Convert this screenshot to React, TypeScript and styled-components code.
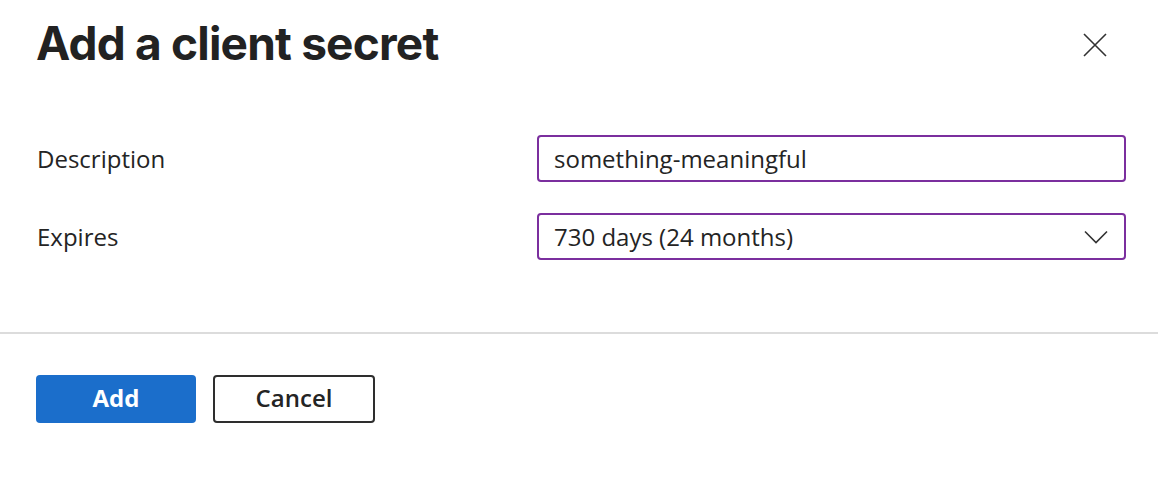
import styled, { createGlobalStyle } from "styled-components";

const GlobalStyle = createGlobalStyle`
  * { box-sizing: border-box; }
  body {
    margin: 0;
    background: #ffffff;
    font-family: "Open Sans", "Noto Sans", sans-serif;
    color: #242424;
  }
`;

const Panel = styled.div`
  width: 1158px;
  height: 478px;
  display: flex;
  flex-direction: column;
`;

const Header = styled.header`
  display: flex;
  justify-content: space-between;
  align-items: flex-start;
  padding: 15px 51px 0 36px;
  height: 115px;
`;

const Title = styled.h1`
  margin: 0;
  font-family: Inter, "Liberation Sans", sans-serif;
  font-weight: 700;
  font-size: 46px;
  letter-spacing: -0.8px;
  color: #222222;
`;

const CloseButton = styled.button`
  border: none;
  background: none;
  padding: 0;
  margin-top: 18px;
  width: 24px;
  height: 24px;
  cursor: pointer;
  color: #323232;
`;

const Form = styled.div`
  display: flex;
  flex-direction: column;
  gap: 31px;
  padding: 20px 32px 0 37px;
  height: 217px;
`;

const Row = styled.div`
  display: grid;
  grid-template-columns: 500px 1fr;
  align-items: center;
`;

const Label = styled.label`
  font-size: 24px;
  color: #242424;
`;

const Field = styled.div`
  height: 47px;
  border: 2px solid #7b2f9e;
  border-radius: 4px;
  display: flex;
  align-items: center;
  justify-content: space-between;
  padding: 0 16px 0 15px;
  font-size: 24px;
  color: #242424;
`;

const Divider = styled.hr`
  margin: 0;
  border: none;
  border-top: 2px solid #dcdcdc;
`;

const Footer = styled.footer`
  display: flex;
  gap: 17px;
  padding: 41px 36px 0;
`;

const Button = styled.button<{ $primary?: boolean }>`
  width: ${(p) => (p.$primary ? "160px" : "162px")};
  height: 48px;
  border-radius: 4px;
  font-family: "Open Sans", "Noto Sans", sans-serif;
  font-size: 24px;
  font-weight: ${(p) => (p.$primary ? 700 : 600)};
  cursor: pointer;
  display: flex;
  align-items: center;
  justify-content: center;
  padding: 0 0 4px;
  background: ${(p) => (p.$primary ? "#1b6ecb" : "#ffffff")};
  color: ${(p) => (p.$primary ? "#ffffff" : "#242424")};
  border: ${(p) => (p.$primary ? "none" : "2px solid #2e2e2e")};
`;

function App() {
  return (
    <>
      <GlobalStyle />
      <Panel>
        <Header>
          <Title>Add a client secret</Title>
          <CloseButton aria-label="Close">
            <svg width="24" height="24" viewBox="0 0 24 24">
              <path d="M1 1 L23 23 M23 1 L1 23" stroke="currentColor" strokeWidth="1.6" />
            </svg>
          </CloseButton>
        </Header>
        <Form>
          <Row>
            <Label>Description</Label>
            <Field>something-meaningful</Field>
          </Row>
          <Row>
            <Label>Expires</Label>
            <Field>
              730 days (24 months)
              <svg width="24" height="14" viewBox="0 0 24 14">
                <path d="M1 1.5 L12 12.5 L23 1.5" fill="none" stroke="#323232" strokeWidth="1.6" />
              </svg>
            </Field>
          </Row>
        </Form>
        <Divider />
        <Footer>
          <Button $primary>Add</Button>
          <Button>Cancel</Button>
        </Footer>
      </Panel>
    </>
  );
}

export default App;
